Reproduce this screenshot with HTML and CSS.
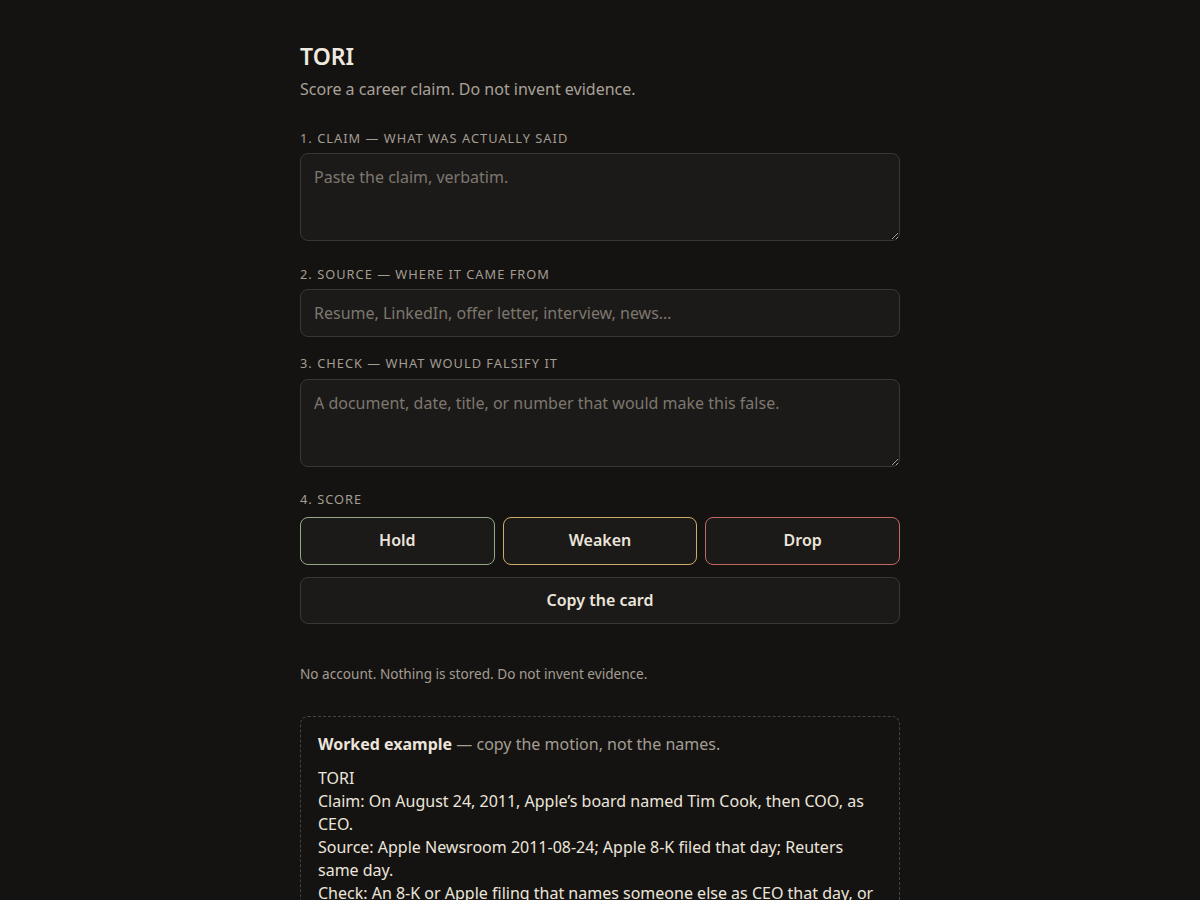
FILE: index.html
```html
<!DOCTYPE html>
<html lang="en">
<head>
<meta charset="utf-8">
<title>TORI</title>
<link rel="stylesheet" href="styles.css">
</head>
<body>
<main class="wrap">
  <h1 class="title">TORI</h1>
  <p class="sub">Score a career claim. Do not invent evidence.</p>

  <div class="field first">
    <label class="label" for="claim">1. Claim — what was actually said</label>
    <textarea id="claim" class="area" placeholder="Paste the claim, verbatim."></textarea>
  </div>

  <div class="field after-area">
    <label class="label" for="source">2. Source — where it came from</label>
    <input id="source" class="input" type="text" placeholder="Resume, LinkedIn, offer letter, interview, news…">
  </div>

  <div class="field after-input">
    <label class="label" for="check">3. Check — what would falsify it</label>
    <textarea id="check" class="area" placeholder="A document, date, title, or number that would make this false."></textarea>
  </div>

  <div class="field score-field">
    <span class="label">4. Score</span>
    <div class="scores">
      <button class="btn hold" type="button">Hold</button>
      <button class="btn weaken" type="button">Weaken</button>
      <button class="btn drop" type="button">Drop</button>
    </div>
    <button class="btn copy" type="button">Copy the card</button>
  </div>

  <p class="note">No account. Nothing is stored. Do not invent evidence.</p>

  <section class="example">
    <p class="ex-head"><strong>Worked example</strong> — copy the motion, not the names.</p>
    <div class="ex-body">TORI
Claim: On August 24, 2011, Apple’s board named Tim Cook, then COO, as CEO.
Source: Apple Newsroom 2011-08-24; Apple 8-K filed that day; Reuters same day.
Check: An 8-K or Apple filing that names someone else as CEO that day, or a record showing Cook was not COO at the time.
Score: Hold</div>
  </section>
</main>
</body>
</html>
```

FILE: styles.css
```css
* { box-sizing: border-box; }

html, body {
  margin: 0;
  background: #151311;
}

body {
  font-family: "Noto Sans", "Open Sans", sans-serif;
  color: #ebe5db;
}

.wrap {
  width: 600px;
  margin: 0 auto;
  padding: 42px 0 40px;
}

.title {
  margin: 0;
  font-size: 23px;
  line-height: 28px;
  font-weight: 600;
  color: #efe9df;
}

.sub {
  margin: 7px 0 0;
  font-size: 16px;
  line-height: 24px;
  color: #a8a299;
}

.field {
  display: flex;
  flex-direction: column;
}

.field.first { margin-top: 28px; }
.field.after-area { margin-top: 24px; }
.field.after-input { margin-top: 17px; }
.field.score-field { margin-top: 23px; }

.label {
  display: block;
  font-size: 12.8px;
  line-height: 18px;
  letter-spacing: 0.08em;
  text-transform: uppercase;
  color: #a39d93;
  margin-bottom: 6px;
}

.field.after-input .label { margin-bottom: 7px; }

.area, .input {
  display: block;
  width: 100%;
  margin: 0;
  font-family: inherit;
  font-size: 16px;
  line-height: 22px;
  color: #ebe5db;
  background: #1c1a18;
  border: 1px solid #3a3733;
  border-radius: 8px;
  padding: 12px 13px;
  outline: none;
}

.area {
  height: 88px;
  resize: vertical;
}

.input { height: 48px; }

.area::placeholder, .input::placeholder {
  color: #7c776f;
  opacity: 1;
}

.scores {
  display: grid;
  grid-template-columns: repeat(3, 1fr);
  gap: 8px;
  margin-top: 3px;
}

.btn {
  display: block;
  height: 48px;
  margin: 0;
  padding: 0 0 2px;
  font-family: inherit;
  font-size: 16px;
  font-weight: 600;
  color: #ebe5db;
  background: #1c1a18;
  border: 1px solid #3a3733;
  border-radius: 8px;
  cursor: pointer;
}

.btn.hold { border-color: #94a883; }
.btn.weaken { border-color: #cdac63; }
.btn.drop { border-color: #c26a61; }

.btn.copy {
  width: 100%;
  height: 47px;
  margin-top: 12px;
}

.note {
  margin: 40px 0 0;
  font-size: 13.6px;
  line-height: 20px;
  color: #a39d93;
}

.example {
  margin-top: 32px;
  border: 1px dashed #46423d;
  border-radius: 8px;
  padding: 15px 17px 16px;
}

.ex-head {
  margin: 0;
  font-size: 16px;
  line-height: 24px;
  color: #a39d93;
}

.ex-head strong {
  color: #ebe5db;
  font-weight: 700;
}

.ex-body {
  margin-top: 11px;
  white-space: pre-wrap;
  font-size: 16px;
  line-height: 23px;
  color: #ebe5db;
}
```
